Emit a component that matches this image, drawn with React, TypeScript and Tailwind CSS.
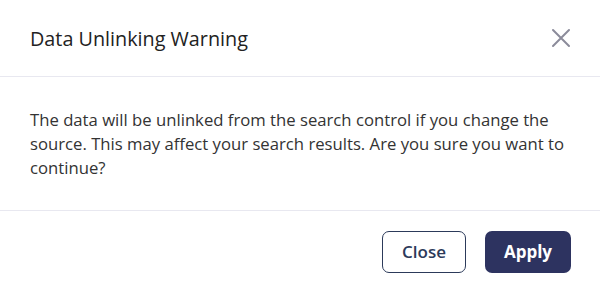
export default function App() {
  return (
    <div
        className="flex h-[292px] w-[600px] flex-col bg-white"
        style={{ fontFamily: '"Open Sans", sans-serif' }}
    >
      <header className="flex h-[77px] shrink-0 items-center justify-between border-b border-[#e8e8f0] pl-[30px] pr-[29px]">
        <h2 className="text-[19.8px] leading-[27px] text-[#222222]">Data Unlinking Warning</h2>
        <button className="text-[#8b8b9a]">
          <svg width="20" height="20" viewBox="0 0 20 20" fill="none" stroke="currentColor" strokeWidth="2" strokeLinecap="round">
            <path d="M2 2 L18 18 M18 2 L2 18" />
          </svg>
        </button>
      </header>
      <div className="border-b border-[#e8e8f0] px-[30px] pb-[30px] pt-[31px] text-[16.7px] leading-[24px] text-[#333333]">
        The data will be unlinked from the search control if you change the
        source. This may affect your search results. Are you sure you want to
        continue?
      </div>
      <footer className="flex grow items-center justify-end gap-[19px] pr-[29px]">
        <button className="h-[42px] w-[84px] rounded-[7px] border border-[#2c3a5a] text-[17px] font-semibold text-[#2c3a5a]">
          Close
        </button>
        <button className="h-[42px] w-[86px] rounded-[7px] bg-[#2d3360] text-[17px] font-bold text-white">
          Apply
        </button>
      </footer>
    </div>
  );
}
